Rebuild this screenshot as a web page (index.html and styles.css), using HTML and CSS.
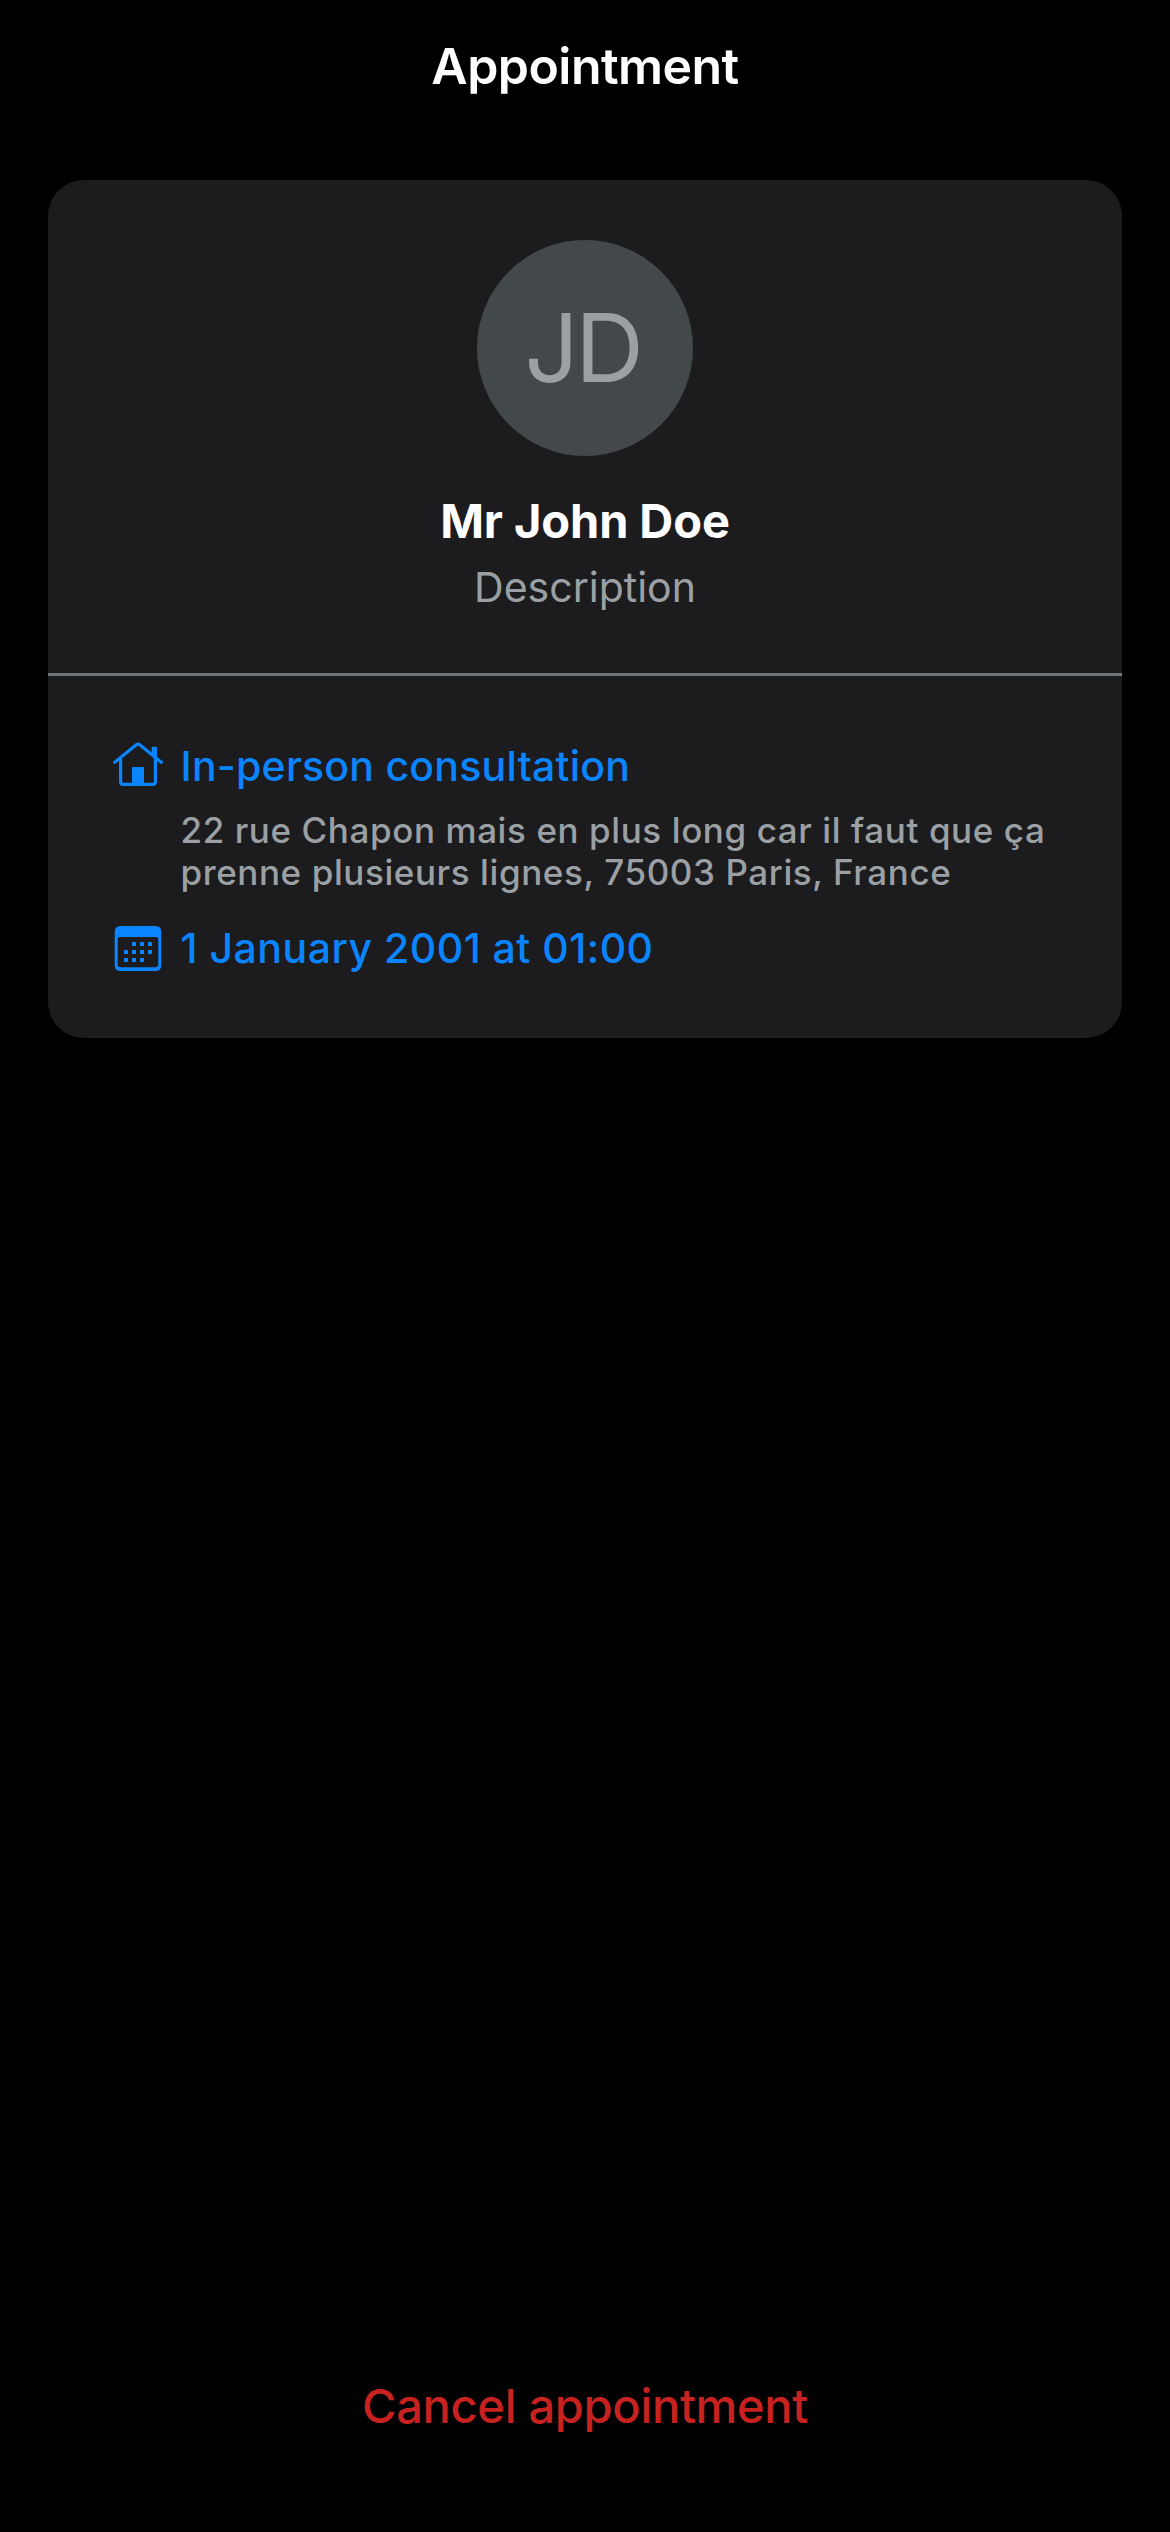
FILE: index.html
```html
<!DOCTYPE html>
<html lang="en">
<head>
<meta charset="utf-8">
<title>Appointment</title>
<link rel="stylesheet" href="styles.css">
</head>
<body>
<div class="screen">
  <header class="navbar"><h1 class="title">Appointment</h1></header>
  <main class="card">
    <section class="profile">
      <div class="avatar">JD</div>
      <h2 class="name">Mr John Doe</h2>
      <p class="description">Description</p>
    </section>
    <section class="details">
      <svg class="icon home" viewBox="0 0 50 45" width="50" height="45" fill="none" stroke="currentColor" stroke-width="3.200" stroke-linecap="round" stroke-linejoin="round">
        <path d="M1.700 20.200 23.600 2.600Q25 1.500 26.400 2.600L48.300 20.200"/>
        <path d="M7.600 16.500V39.800Q7.600 42.400 10.200 42.400H39.800Q42.400 42.400 42.400 39.800V16.500"/>
        <path d="M38.700 13V5.700Q38.700 4.700 39.700 4.700H43Q44 4.700 44 5.700V17Z" fill="currentColor" stroke="none"/>
        <path d="M19 43V26Q19 25 20 25H30Q31 25 31 26V43Z" fill="currentColor" stroke="none"/>
      </svg>
      <p class="label">In-person consultation</p>
      <p class="address">22 rue Chapon mais en plus long car il faut que ça<br>prenne plusieurs lignes, 75003 Paris, France</p>
      <svg class="icon calendar" viewBox="0 0 50 45" width="50" height="45" fill="currentColor">
        <path fill-rule="evenodd" d="M7.700 0H42.300Q48.300 0 48.300 6V39Q48.300 45 42.300 45H7.700Q1.700 45 1.700 39V6Q1.700 0 7.700 0ZM7 11Q4.700 11 4.700 13.300V38.500Q4.700 41.300 7.500 41.300H42.500Q45.300 41.300 45.300 38.500V13.300Q45.300 11 43 11Z"/>
        <path d="M19 16h4v4h-4zM27 16h4v4h-4zM35 16h4v4h-4zM11 24h4v4h-4zM19 24h4v4h-4zM27 24h4v4h-4zM35 24h4v4h-4zM11 32h4v4h-4zM19 32h4v4h-4zM27 32h4v4h-4z"/>
      </svg>
      <p class="label date">1 January 2001 at 01:00</p>
    </section>
  </main>
  <footer class="footer"><button class="cancel">Cancel appointment</button></footer>
</div>
</body>
</html>
```
FILE: styles.css
```css
* { box-sizing: border-box; margin: 0; padding: 0; }
body { background: #000; color: #fff; font-family: Inter, "Liberation Sans", sans-serif; }
.screen { width: 1170px; height: 2532px; display: flex; flex-direction: column; padding: 0 48px; }
.navbar { height: 180px; padding-top: 36px; text-align: center; }
.title { font-size: 50px; line-height: 60px; font-weight: 600; letter-spacing: -.55px; }
.card { height: 858px; border-radius: 36px; background: #1c1c1e; }
.profile { height: 496px; padding-top: 60px; border-bottom: 3px solid #6c757a; display: flex; flex-direction: column; align-items: center; }
.avatar { width: 216px; height: 216px; padding-right: 5px; border-radius: 50%; background: #43484b; color: #9aa0a4; font-size: 95px; line-height: 215px; text-align: center; letter-spacing: -3.5px; }
.name { margin-top: 35px; font-size: 47px; line-height: 60px; font-weight: 700; letter-spacing: -.1px; }
.description { margin-top: 11px; color: #9aa0a4; font-size: 41px; line-height: 50px; }
.details { display: grid; grid-template-columns: 50px 1fr; column-gap: 17.5px; padding: 65px 0 0 65px; }
.label { color: #0a84ff; font-size: 41px; line-height: 50px; font-weight: 500; letter-spacing: .24px; }
.icon { color: #0a84ff; }
.home { margin-top: 1px; }
.address { grid-column: 2; margin-top: 18px; color: #9aa0a4; font-size: 35px; line-height: 42px; font-weight: 500; letter-spacing: .59px; white-space: nowrap; }
.calendar { margin-top: 33px; }
.date { margin-top: 30px; letter-spacing: .5px; }
.footer { margin-top: auto; height: 156px; text-align: center; }
.cancel { border: 0; background: none; color: #c7221f; font: 500 47px/60px Inter, "Liberation Sans", sans-serif; letter-spacing: -.3px; }
```
